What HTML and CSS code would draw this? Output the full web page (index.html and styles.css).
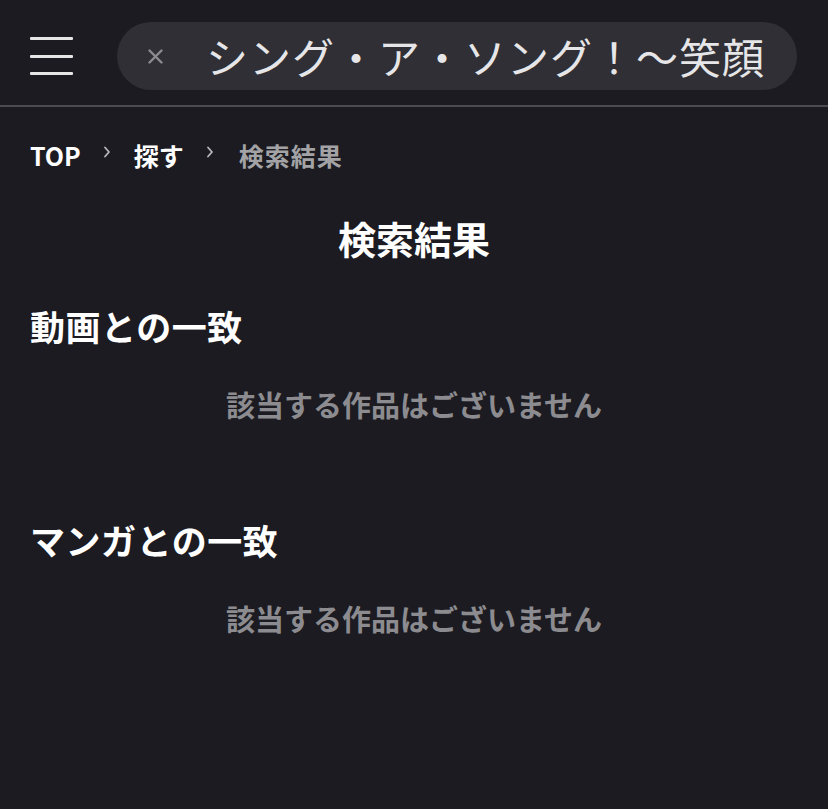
FILE: index.html
```html
<!DOCTYPE html>
<html lang="ja">
<head>
<meta charset="utf-8">
<link rel="stylesheet" href="styles.css">
</head>
<body>
<header class="header">
  <button class="menu" aria-label="menu">
    <span></span><span></span><span></span>
  </button>
  <div class="search">
    <svg class="clear" width="15" height="15" viewBox="0 0 15 15" aria-hidden="true">
      <path d="M1.5 1.5 L13.5 13.5 M13.5 1.5 L1.5 13.5" stroke="#8c8c90" stroke-width="2.4" stroke-linecap="round" fill="none"/>
    </svg>
    <span class="query">シング・ア・ソング！〜笑顔</span>
  </div>
</header>
<nav class="crumbs">
  <a class="crumb">TOP</a>
  <svg class="sep" width="8" height="12" viewBox="0 0 8 12" aria-hidden="true">
    <path d="M2 1.5 L6 6 L2 10.5" stroke="#b9b9bc" stroke-width="1.8" fill="none" stroke-linecap="round" stroke-linejoin="round"/>
  </svg>
  <a class="crumb">探す</a>
  <svg class="sep" width="8" height="12" viewBox="0 0 8 12" aria-hidden="true">
    <path d="M2 1.5 L6 6 L2 10.5" stroke="#b9b9bc" stroke-width="1.8" fill="none" stroke-linecap="round" stroke-linejoin="round"/>
  </svg>
  <span class="crumb current">検索結果</span>
</nav>
<main class="main">
  <h1 class="title">検索結果</h1>
  <section class="section">
    <h2 class="section-title">動画との一致</h2>
    <p class="empty">該当する作品はございません</p>
  </section>
  <section class="section">
    <h2 class="section-title">マンガとの一致</h2>
    <p class="empty">該当する作品はございません</p>
  </section>
</main>
</body>
</html>
```
FILE: styles.css
```css
html, body {
  margin: 0;
  padding: 0;
  background: #1b1b21;
  color: #ffffff;
  font-family: "Noto Sans CJK JP", "Noto Sans", sans-serif;
}
.header {
  box-sizing: border-box;
  display: flex;
  align-items: center;
  height: 107px;
  padding: 7px 31px 0 30px;
  border-bottom: 2px solid #4b4b50;
  gap: 44px;
}
.menu {
  display: flex;
  flex-direction: column;
  justify-content: space-between;
  width: 43px;
  height: 38px;
  padding: 0;
  border: 0;
  background: none;
}
.menu span {
  display: block;
  height: 3px;
  background: #e6e6e6;
  border-radius: 1px;
}
.search {
  flex: 1;
  display: flex;
  align-items: center;
  height: 68px;
  border-radius: 34px;
  background: #2f2f35;
  padding: 0 20px 0 31px;
}
.clear {
  flex: none;
  margin-right: 43px;
}
.query {
  color: #e6e6e8;
  font-size: 42px;
  letter-spacing: 1px;
  white-space: nowrap;
  line-height: 60px;
}
.crumbs {
  display: flex;
  align-items: center;
  padding: 0 30px;
  margin-top: 33px;
  height: 30px;
  font-size: 25px;
  font-weight: 700;
  line-height: 30px;
}
.crumb {
  color: #ffffff;
}
.crumb.current {
  color: #a3a3a6;
  letter-spacing: 1px;
}
.sep {
  flex: none;
  margin: 0 23px 6px 22px;
}
.sep + .crumb.current {
  margin-left: 2px;
}
.main {
  padding: 0 30px;
}
.title {
  margin: 43px 0 0;
  text-align: center;
  font-size: 38px;
  font-weight: 700;
  line-height: 50px;
}
.section {
  margin-top: 39px;
}
.section + .section {
  margin-top: 92px;
}
.section-title {
  margin: 0;
  font-size: 35px;
  letter-spacing: 0.5px;
  font-weight: 700;
  line-height: 48px;
}
.empty {
  margin: 34px 0 0;
  text-align: center;
  color: #8c8c90;
  font-size: 29px;
  font-weight: 700;
  line-height: 40px;
}
```
